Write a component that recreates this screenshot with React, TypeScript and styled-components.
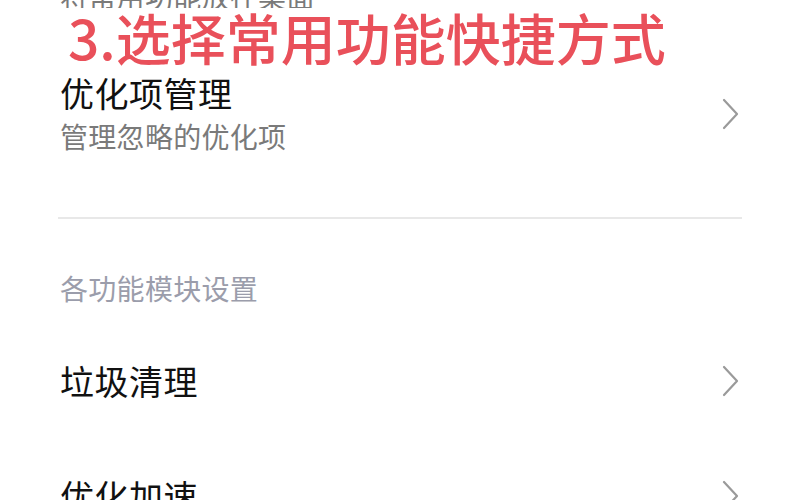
import * as React from 'react';
import styled, { createGlobalStyle } from 'styled-components';

const GlobalStyle = createGlobalStyle`
  html, body {
    margin: 0;
    padding: 0;
    background: #ffffff;
  }
  body {
    font-family: "Noto Sans CJK SC", "Noto Sans", sans-serif;
  }
`;

const Screen = styled.div`
  position: relative;
  width: 800px;
  height: 500px;
  overflow: hidden;
  background: #ffffff;
`;

const List = styled.div`
  display: flex;
  flex-direction: column;
  margin-top: -96px;
`;

const Row = styled.div<{ $height: number }>`
  display: flex;
  align-items: center;
  justify-content: space-between;
  height: ${p => p.$height}px;
  padding: 0 60px;
  box-sizing: border-box;
`;

const TextBlock = styled.div`
  display: flex;
  flex-direction: column;
`;

const Title = styled.div`
  font-size: 34px;
  line-height: 44px;
  color: #111111;
  letter-spacing: 0.5px;
`;

const Subtitle = styled.div`
  font-size: 28px;
  line-height: 42px;
  color: #7a7a7a;
  letter-spacing: 0.3px;
`;

const Divider = styled.div`
  height: 2px;
  margin: 33px 58px 0;
  background: #e8e8e8;
`;

const SectionHeader = styled.div`
  padding: 52px 60px 18px;
  font-size: 28px;
  line-height: 34px;
  color: #9b9dab;
  letter-spacing: 0.3px;
`;

// caption pasted over the screenshot
const Caption = styled.div`
  position: absolute;
  top: 8px;
  left: 44px;
  padding: 0 24px;
  background: #ffffff;
  font-size: 55px;
  line-height: 56px;
  font-weight: 500;
  color: #e9505a;
`;

const Chevron: React.FC = () => (
  <svg width="18" height="32" viewBox="0 0 18 32" fill="none">
    <polyline
      points="2,2 15,16 2,30"
      stroke="#9a9a9a"
      strokeWidth="2.2"
      strokeLinecap="round"
      strokeLinejoin="round"
    />
  </svg>
);

interface IItem {
  title: string;
  subtitle?: string;
}

const Item: React.FC<IItem & { height: number }> = ({ title, subtitle, height }) => (
  <Row $height={height}>
    <TextBlock>
      <Title>{title}</Title>
      {subtitle ? <Subtitle>{subtitle}</Subtitle> : null}
    </TextBlock>
    <Chevron />
  </Row>
);

const App: React.FC = () => {
  return (
    <Screen>
      <GlobalStyle />
      <List>
        <Item height={140} title="桌面快捷方式" subtitle="将常用功能放在桌面" />
        <Item height={140} title="优化项管理" subtitle="管理忽略的优化项" />
        <Divider />
        <SectionHeader>各功能模块设置</SectionHeader>
        <Item height={115} title="垃圾清理" />
        <Item height={115} title="优化加速" />
      </List>
      <Caption>3.选择常用功能快捷方式</Caption>
    </Screen>
  );
};

export default App;
